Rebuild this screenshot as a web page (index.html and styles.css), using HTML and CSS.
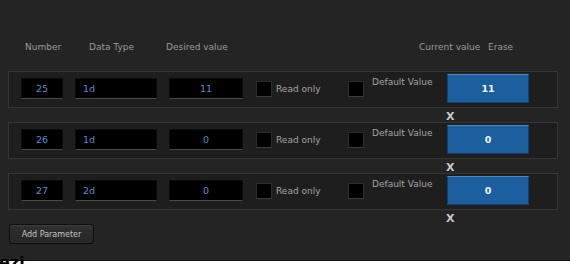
FILE: index.html
```html
<!DOCTYPE html>
<html lang="en">
<head>
  <meta charset="UTF-8" />
  <title>Parameters</title>
  <link rel="stylesheet" href="styles.css">
</head>
<body>

<div class="container">
  <div class="head">
    <span class="h-num">Number</span>
    <span class="h-type">Data Type</span>
    <span class="h-desired">Desired value</span>
    <span class="h-current">Current value</span>
    <span class="h-erase">Erase</span>
  </div>

  <div class="param">
    <div class="row">
      <input class="f-num" type="text" value="25" />
      <input class="f-type" type="text" value="1d" />
      <input class="f-desired" type="text" value="11" />
      <input class="check" type="checkbox" />
      <span class="lbl-ro">Read only</span>
      <input class="check" type="checkbox" />
      <span class="lbl-def">Default Value</span>
      <button class="current">11</button>
    </div>
    <div class="erase">X</div>
  </div>

  <div class="param">
    <div class="row">
      <input class="f-num" type="text" value="26" />
      <input class="f-type" type="text" value="1d" />
      <input class="f-desired" type="text" value="0" />
      <input class="check" type="checkbox" />
      <span class="lbl-ro">Read only</span>
      <input class="check" type="checkbox" />
      <span class="lbl-def">Default Value</span>
      <button class="current">0</button>
    </div>
    <div class="erase">X</div>
  </div>

  <div class="param">
    <div class="row">
      <input class="f-num" type="text" value="27" />
      <input class="f-type" type="text" value="2d" />
      <input class="f-desired" type="text" value="0" />
      <input class="check" type="checkbox" />
      <span class="lbl-ro">Read only</span>
      <input class="check" type="checkbox" />
      <span class="lbl-def">Default Value</span>
      <button class="current">0</button>
    </div>
    <div class="erase">X</div>
  </div>

  <button class="add">Add Parameter</button>
</div>

<div class="next"><span>ezi</span></div>

</body>
</html>
```

FILE: styles.css
```css
body {
  margin: 0;
  background: #242424;
  font-family: "DejaVu Sans", Verdana, sans-serif;
  font-size: 9px;
  color: #9a9a9a;
}
.container {
  height: 260px;
  padding: 0 12px 0 8px;
  box-sizing: border-box;
  overflow: hidden;
}
.head {
  display: flex;
  padding: 42px 0 0 17px;
  height: 71px;
  line-height: 11px;
  box-sizing: border-box;
}
.h-num { width: 64px; }
.h-type { width: 77px; }
.h-desired { width: 253px; }
.h-current { width: 69px; }

.row {
  display: flex;
  align-items: center;
  width: 550px;
  box-sizing: border-box;
  padding: 2px 0 4px 12px;
  background: #1e1e1e;
  border: 1px solid #353535;
}
.row input[type="text"] {
  height: 21px;
  box-sizing: border-box;
  margin: 0 12px 0 0;
  padding: 0 7px;
  background: #000;
  border: 1px solid #0c0c0c;
  border-bottom-color: #4a4a4a;
  color: #4f8fd4;
  font-family: "DejaVu Sans", Verdana, sans-serif;
  font-size: 9.5px;
}
.f-num { width: 42px; text-align: center; }
.f-type { width: 82px; }
.f-desired { width: 74px; text-align: center; margin-right: 13px !important; }

.check {
  appearance: none;
  width: 16px;
  height: 16px;
  margin: 0;
  background: #000;
  border: 1px solid #2c2c2c;
  border-bottom-color: #3c3c3c;
}
.lbl-ro {
  width: 72px;
  margin-left: 4px;
  color: #a4a4a4;
}
.lbl-def {
  align-self: flex-start;
  width: 75px;
  margin: 3px 0 0 8px;
  line-height: 11px;
  color: #a4a4a4;
}
.current {
  width: 82px;
  height: 29px;
  padding: 0;
  background: #1c5f9f;
  border: 1px solid #14426f;
  border-top-color: #4b8bc8;
  color: #f2f2f2;
  font-family: "DejaVu Sans", Verdana, sans-serif;
  font-size: 9.5px;
  font-weight: bold;
}
.erase {
  height: 14px;
  box-sizing: border-box;
  padding: 4px 0 0 438px;
  line-height: 10px;
  font-size: 11px;
  font-weight: bold;
  color: #c8c8c8;
}
.add {
  display: block;
  width: 85px;
  height: 20px;
  margin: 0 0 0 1px;
  padding: 0;
  background: linear-gradient(#303030, #262626);
  border: 1px solid #0e0e0e;
  border-radius: 3px;
  box-shadow: inset 0 1px 0 #3e3e3e;
  color: #c4c4c4;
  font-family: "DejaVu Sans", Verdana, sans-serif;
  font-size: 8px;
}
.next {
  height: 4px;
  background: #fff;
  border-top: 1px solid #111;
}
.next span {
  display: block;
  margin: -6px 0 0 -1px;
  font-weight: bold;
  font-size: 16px;
  line-height: 16px;
  color: #000;
}
```
